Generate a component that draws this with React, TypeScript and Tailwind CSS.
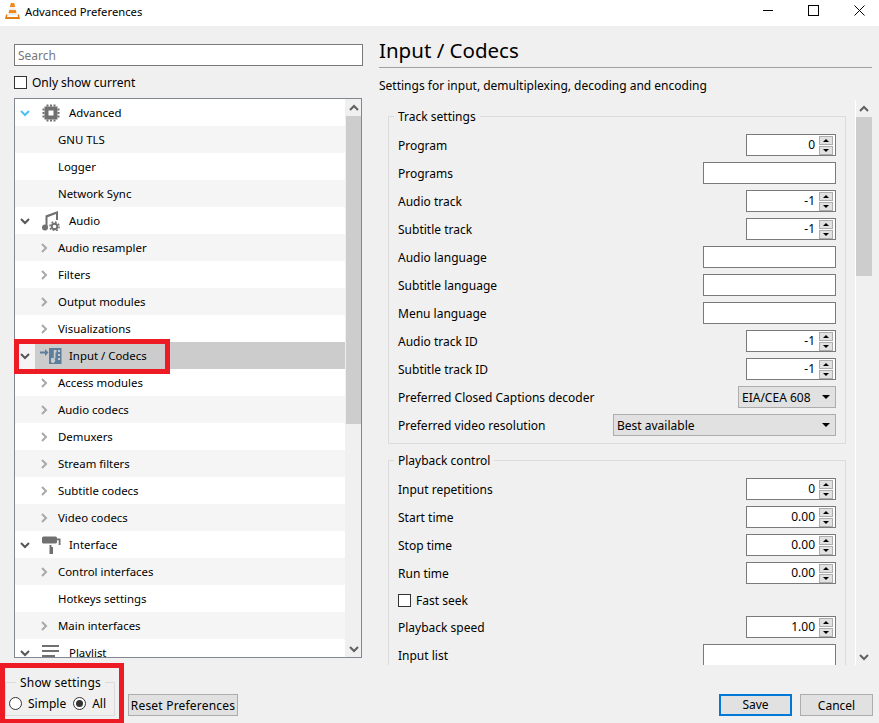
import type { ReactNode } from "react";

type TreeRow = {
  label: string;
  depth: 0 | 1;
  expandable?: boolean;
  icon?: ReactNode;
  accent?: boolean;
  selected?: boolean;
};

const ChipIcon = () => (
  <svg width="18" height="18" viewBox="0 0 18 18" fill="#707070">
    <path fillRule="evenodd" d="M2.500 2.500h13v13h-13zM6.500 6.500v5h5v-5z" />
    <path d="M4.500 0.500h2v2h-2zM8 0.500h2v2H8zM11.500 0.500h2v2h-2zM4.500 15.500h2v2h-2zM8 15.500h2v2H8zM11.500 15.500h2v2h-2zM0.500 4.500h2v2h-2zM0.500 8h2v2h-2zM0.500 11.500h2v2h-2zM15.500 4.500h2v2h-2zM15.500 8h2v2h-2zM15.500 11.500h2v2h-2z" />
  </svg>
);

const MusicIcon = () => (
  <svg width="18" height="21" viewBox="0 0 18 21" fill="#707070">
    <path d="M3.500 5.500 16 1v9h-2V4L5.500 7.200V17h-2z" />
    <circle cx="3" cy="17.500" r="3" />
    <circle cx="12.500" cy="16.500" r="2.800" fill="none" stroke="#707070" strokeWidth="2" />
    <circle cx="12.500" cy="16.500" r="4.600" fill="none" stroke="#707070" strokeWidth="1.500" strokeDasharray="1.800 1.800" />
  </svg>
);

const CodecIcon = () => (
  <svg width="22" height="18" viewBox="0 0 22 18" fill="#5b7f9c">
    <path d="M0 4.500h5V2l3.500 3.500L5 9V6.500H0z" />
    <path fillRule="evenodd" d="M9 1h12.500v16H9zM11 15v-3.200a2.400 2.400 0 1 1 0 3.200zM13.800 3v8.500h1.700V5.500h1V3z" />
    <path fill="#cccccc" d="M18 3h2v2h-2zM18 7h2v2h-2zM18 11h2v2h-2z" />
  </svg>
);

const RollerIcon = () => (
  <svg width="19" height="18" viewBox="0 0 19 18" fill="#707070">
    <rect x="0" y="0.500" width="15" height="7" rx="1.500" />
    <path d="M15 2.500h3.500v6.500H9.500v2h1.500v7H7.500v-9h9.200V4.300H15z" />
  </svg>
);

const PlaylistIcon = () => (
  <svg width="18" height="18" viewBox="0 0 18 18" fill="#707070">
    <path d="M0 1h17v2H0zM0 6h17v2H0zM0 11h13v2H0zM0 16h10v2H0z" />
  </svg>
);

const ConeIcon = () => (
  <svg width="15" height="16" viewBox="0 0 15 16">
    <path d="M5.800 0h3.400l1 4H4.800z" fill="#f08a1c" />
    <path d="M4.800 4h5.400l.6 3H4.200z" fill="#f2f2f2" />
    <path d="M4.200 7h6.600l.7 3.200H3.500z" fill="#ef8a1a" />
    <path d="M3.500 10.200h8l.5 2H3z" fill="#ececec" />
    <path d="M2.500 11.500H1L0 16h15l-1-4.500h-1.500L13 14H2z" fill="#e57a10" />
  </svg>
);

const Chevron = ({ open, color }: { open: boolean; color: string }) => (
  <svg width="10" height="10" viewBox="0 0 10 10" fill="none" stroke={color} strokeWidth="2">
    <path d={open ? "M1 3l4 4 4-4" : "M3 1l4 4-4 4"} />
  </svg>
);

const UpArrow = () => (
  <svg width="10" height="10" viewBox="0 0 10 10" fill="none" stroke="#606060" strokeWidth="2">
    <path d="M1 7l4-4 4 4" />
  </svg>
);

const treeRows: TreeRow[] = [
  { label: "Advanced", depth: 0, icon: <ChipIcon />, accent: true },
  { label: "GNU TLS", depth: 1 },
  { label: "Logger", depth: 1 },
  { label: "Network Sync", depth: 1 },
  { label: "Audio", depth: 0, icon: <MusicIcon /> },
  { label: "Audio resampler", depth: 1, expandable: true },
  { label: "Filters", depth: 1, expandable: true },
  { label: "Output modules", depth: 1, expandable: true },
  { label: "Visualizations", depth: 1, expandable: true },
  { label: "Input / Codecs", depth: 0, icon: <CodecIcon />, selected: true },
  { label: "Access modules", depth: 1, expandable: true },
  { label: "Audio codecs", depth: 1, expandable: true },
  { label: "Demuxers", depth: 1, expandable: true },
  { label: "Stream filters", depth: 1, expandable: true },
  { label: "Subtitle codecs", depth: 1, expandable: true },
  { label: "Video codecs", depth: 1, expandable: true },
  { label: "Interface", depth: 0, icon: <RollerIcon /> },
  { label: "Control interfaces", depth: 1, expandable: true },
  { label: "Hotkeys settings", depth: 1 },
  { label: "Main interfaces", depth: 1, expandable: true },
  { label: "Playlist", depth: 0, icon: <PlaylistIcon /> },
];

function Tree() {
  return (
    <div className="min-w-0 flex-1 overflow-hidden bg-white text-[11.4px]">
      {treeRows.map((row, i) => {
        const stripe = i % 2 === 1 ? "bg-[#f5f5f5]" : "bg-white";
        if (row.depth === 0) {
          return (
            <div key={row.label} className={`flex h-[27px] items-center ${stripe}`}>
              <div className="flex w-[20px] justify-center pr-px">
                <Chevron open color={row.accent ? "#4cc2f1" : "#555555"} />
              </div>
              <div className={`flex h-full flex-1 items-center ${row.selected ? "bg-[#cccccc]" : ""}`}>
                <div className="flex w-[32px] justify-center">{row.icon}</div>
                <span className="ml-[2px]">{row.label}</span>
              </div>
            </div>
          );
        }
        return (
          <div key={row.label} className={`flex h-[27px] items-center ${stripe}`}>
            <div className="flex w-[43px] pl-[24px]">
              {row.expandable && <Chevron open={false} color="#a8a8a8" />}
            </div>
            <span>{row.label}</span>
          </div>
        );
      })}
    </div>
  );
}

function Spin({ value }: { value: string }) {
  return (
    <div className="flex h-[22px] w-[90px] items-center border border-[#7a7a7a] bg-white pr-[2px]">
      <span className="flex-1 pr-[4px] text-right">{value}</span>
      <div className="flex w-[14px] flex-col gap-[1px]">
        <div className="flex h-[9px] items-center justify-center border border-[#adadad] bg-[#e1e1e1]">
          <div className="h-0 w-0 border-x-[3px] border-b-[3px] border-x-transparent border-b-black" />
        </div>
        <div className="flex h-[9px] items-center justify-center border border-[#adadad] bg-[#e1e1e1]">
          <div className="h-0 w-0 border-x-[3px] border-t-[3px] border-x-transparent border-t-black" />
        </div>
      </div>
    </div>
  );
}

function TextBox() {
  return <div className="h-[22px] w-[133px] border border-[#7a7a7a] bg-white" />;
}

function Combo({ value, width }: { value: string; width: string }) {
  return (
    <div className={`flex h-[22px] items-center justify-between border border-[#adadad] bg-[#e1e1e1] pl-[3px] pr-[5px] ${width}`}>
      <span className="pt-[2px]">{value}</span>
      <div className="h-0 w-0 border-x-[4px] border-t-[4px] border-x-transparent border-t-black" />
    </div>
  );
}

function Row({ label, children }: { label: string; children: ReactNode }) {
  return (
    <div className="flex h-[28px] items-center justify-between">
      <span className="pt-[2px]">{label}</span>
      {children}
    </div>
  );
}

function Group({ title, children, className }: { title: string; children: ReactNode; className: string }) {
  return (
    <fieldset className={`w-[458px] border border-[#dcdcdc] px-[9px] ${className}`}>
      <legend className="-ml-[4px] h-[16px] px-[4px] leading-[18px]">{title}</legend>
      {children}
    </fieldset>
  );
}

export default function App() {
  return (
    <div className="relative flex h-[723px] w-[879px] flex-col overflow-hidden bg-[#f0f0f0] text-[12px] text-black [font-family:'Noto_Sans',sans-serif]">
      {/* title bar */}
      <div className="flex h-[26px] shrink-0 items-center bg-white pb-[5px] pl-[5px]">
        <ConeIcon />
        <span className="ml-[5px] flex-1 pt-[3px] text-[11.25px]">Advanced Preferences</span>
        <div className="mr-[14px] flex items-center">
          <div className="h-px w-[10px] bg-black" />
          <div className="ml-[35px] h-[11px] w-[11px] border border-black" />
          <svg className="ml-[35px]" width="11" height="11" viewBox="0 0 11 11" stroke="#000" strokeWidth="1">
            <path d="M.500.500l10 10M10.500.500l-10 10" />
          </svg>
        </div>
      </div>

      <div className="flex h-[639px] shrink-0">
        {/* left column */}
        <div className="ml-[14px] flex w-[349px] shrink-0 flex-col pt-[18px]">
          <input
            placeholder="Search"
            className="h-[22px] w-full border border-[#7a7a7a] bg-white px-[3px] outline-none placeholder:text-[#777777]"
          />
          <label className="mt-[9px] flex h-[14px] items-center">
            <span className="h-[13px] w-[13px] border border-[#333333] bg-white" />
            <span className="ml-[5px] pt-[2px]">Only show current</span>
          </label>
          <div className="mt-[9px] flex h-[560px] w-[348px] border border-[#828790]">
            <Tree />
            <div className="flex w-[16px] shrink-0 flex-col bg-[#f0f0f0] pl-px">
              <div className="flex h-[17px] shrink-0 items-center justify-center">
                <UpArrow />
              </div>
              <div className="h-[308px] shrink-0 bg-[#cdcdcd]" />
              <div className="flex-1" />
              <div className="flex h-[17px] shrink-0 items-center justify-center">
                <Chevron open color="#606060" />
              </div>
            </div>
          </div>
        </div>

        {/* right column */}
        <div className="ml-[16px] flex w-[493px] shrink-0 flex-col">
          <div className="h-[42px] shrink-0 border-b border-[#a0a0a0] text-[20.5px] leading-[49px]">Input / Codecs</div>
          <div className="flex h-[32px] shrink-0 items-center pt-[4px]">Settings for input, demultiplexing, decoding and encoding</div>
          <div className="flex h-[565px] shrink-0 overflow-hidden">
            <div className="w-[476px] shrink-0 pl-[9px] pt-[8px]">
              <Group title="Track settings" className="pb-[4px] pt-[7px]">
                <Row label="Program"><Spin value="0" /></Row>
                <Row label="Programs"><TextBox /></Row>
                <Row label="Audio track"><Spin value="-1" /></Row>
                <Row label="Subtitle track"><Spin value="-1" /></Row>
                <Row label="Audio language"><TextBox /></Row>
                <Row label="Subtitle language"><TextBox /></Row>
                <Row label="Menu language"><TextBox /></Row>
                <Row label="Audio track ID"><Spin value="-1" /></Row>
                <Row label="Subtitle track ID"><Spin value="-1" /></Row>
                <Row label="Preferred Closed Captions decoder"><Combo value="EIA/CEA 608" width="w-[98px]" /></Row>
                <Row label="Preferred video resolution"><Combo value="Best available" width="w-[223px]" /></Row>
              </Group>
              <Group title="Playback control" className="mt-[8px] pt-[7px]">
                <Row label="Input repetitions"><Spin value="0" /></Row>
                <Row label="Start time"><Spin value="0.00" /></Row>
                <Row label="Stop time"><Spin value="0.00" /></Row>
                <Row label="Run time"><Spin value="0.00" /></Row>
                <div className="flex h-[26px] items-center">
                  <span className="h-[13px] w-[13px] border border-[#333333] bg-white" />
                  <span className="ml-[5px] pt-[2px]">Fast seek</span>
                </div>
                <Row label="Playback speed"><Spin value="1.00" /></Row>
                <Row label="Input list"><TextBox /></Row>
              </Group>
            </div>
            <div className="flex w-[17px] shrink-0 flex-col border-l border-white bg-[#f0f0f0]">
              <div className="flex h-[17px] shrink-0 items-center justify-center">
                <UpArrow />
              </div>
              <div className="h-[159px] shrink-0 bg-[#cdcdcd]" />
              <div className="flex-1" />
              <div className="flex h-[17px] shrink-0 items-center justify-center">
                <Chevron open color="#606060" />
              </div>
            </div>
          </div>
        </div>
      </div>

      {/* bottom buttons */}
      <div className="flex flex-1 items-start">
        <fieldset className="ml-[5px] mt-[9px] h-[42px] w-[110px] border border-[#dcdcdc] pl-[3px]">
          <legend className="ml-[7px] h-[16px] px-[4px] leading-[18px] tracking-[0.2px]">Show settings</legend>
          <div className="mt-[2px] flex h-[22px] items-center">
            <span className="h-[13px] w-[13px] rounded-full border border-[#333333] bg-white" />
            <span className="ml-[6px] pt-[2px]">Simple</span>
            <span className="ml-[7px] flex h-[13px] w-[13px] items-center justify-center rounded-full border border-[#333333] bg-white">
              <span className="h-[7px] w-[7px] rounded-full bg-[#333333]" />
            </span>
            <span className="ml-[6px] pt-[2px]">All</span>
          </div>
        </fieldset>
        <button className="ml-[13px] mt-[29px] h-[22px] w-[110px] border border-[#adadad] bg-[#e1e1e1] pt-[2px] tracking-[0.2px]">Reset Preferences</button>
        <button className="ml-[481px] mt-[29px] h-[22px] w-[73px] border-2 border-[#0078d7] bg-[#e1e1e1]">Save</button>
        <button className="ml-[8px] mt-[29px] h-[22px] w-[73px] border border-[#adadad] bg-[#e1e1e1] pt-[2px]">Cancel</button>
      </div>

      {/* red annotation boxes */}
      <div className="absolute left-[14px] top-[339px] h-[35px] w-[156px] border-[5px] border-[#ed1c24]" />
      <div className="absolute left-0 top-[663px] h-[60px] w-[124px] border-[5px] border-b-4 border-[#ed1c24]" />
    </div>
  );
}
